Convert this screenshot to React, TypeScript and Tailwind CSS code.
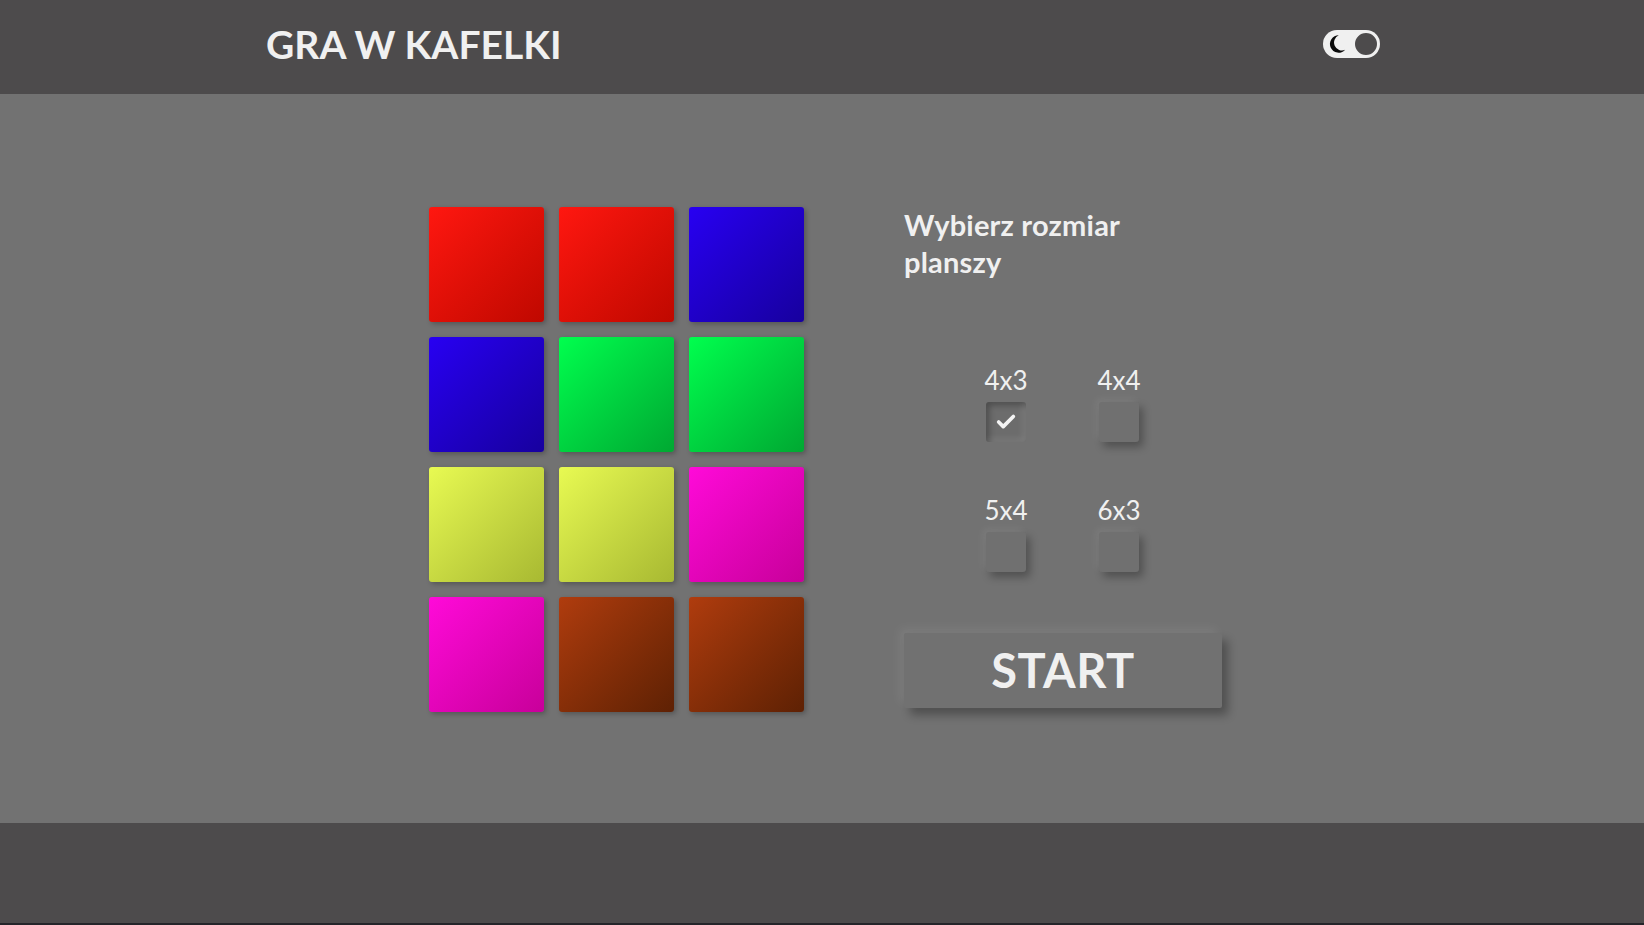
import { Check } from "lucide-react";

const tiles = [
  "from-[#ff1710] to-[#bf0800]",
  "from-[#ff1710] to-[#bf0800]",
  "from-[#2800f2] to-[#17009e]",
  "from-[#2800f2] to-[#17009e]",
  "from-[#00ff4e] to-[#00a832]",
  "from-[#00ff4e] to-[#00a832]",
  "from-[#e8fa52] to-[#a8b932]",
  "from-[#e8fa52] to-[#a8b932]",
  "from-[#ff0ad9] to-[#c8009a]",
  "from-[#ff0ad9] to-[#c8009a]",
  "from-[#b03c0e] to-[#5e2104]",
  "from-[#b03c0e] to-[#5e2104]",
];

const sizes = [
  { label: "4x3", checked: true },
  { label: "4x4", checked: false },
  { label: "5x4", checked: false },
  { label: "6x3", checked: false },
];

function ThemeToggle() {
  return (
    <div className="flex h-[28px] w-[57px] items-center justify-between rounded-full bg-[#f0f0f0] pl-[2px] pr-[1px]">
      <svg width="22" height="22" viewBox="0 0 24 24">
        <path
          d="M15 2.5a9.5 9.5 0 1 0 7 15.8A8 8 0 0 1 15 2.5z"
          fill="#0a0a0a"
        />
      </svg>
      <div className="h-[26px] w-[26px] rounded-full border-2 border-[#f0f0f0] bg-[#4d4b4c]" />
    </div>
  );
}

export default function App() {
  return (
    <div
      className="flex min-h-screen flex-col bg-[#727272] text-[#f0f0f0]"
      style={{ fontFamily: "Lato, 'Open Sans', sans-serif" }}
    >
      <header className="flex h-[94px] items-center justify-between bg-[#4d4b4c] pb-[6px] pl-[266px] pr-[264px]">
        <h1 className="text-[39px] font-bold leading-none">GRA W KAFELKI</h1>
        <ThemeToggle />
      </header>

      <main className="flex h-[729px] items-center justify-center pl-[7px]">
        <div className="mt-[2px] grid grid-cols-3 gap-[15px]">
          {tiles.map((t, i) => (
            <div
              key={i}
              className={`h-[115px] w-[115px] rounded-[3px] bg-gradient-to-br ${t} shadow-[2px_2px_5px_rgba(0,0,0,0.25)]`}
            />
          ))}
        </div>

        <div className="ml-[100px] flex h-[505px] w-[318px] flex-col">
          <h2 className="text-[29px] font-bold leading-[37px] tracking-[0.2px]">
            Wybierz rozmiar
            <br />
            planszy
          </h2>

          <div className="mt-[84px] ml-[72px] grid grid-cols-[60px_60px] gap-x-[53px] gap-y-[52px]">
            {sizes.map((s) => (
              <div key={s.label} className="flex flex-col items-center">
                <span className="text-[26px] leading-[32px]">{s.label}</span>
                <div
                  className={
                    s.checked
                      ? "mt-[6px] flex h-[40px] w-[40px] items-center justify-center rounded-[3px] bg-[#6c6c6c] shadow-[inset_3px_3px_6px_rgba(0,0,0,0.3),inset_-3px_-3px_6px_rgba(255,255,255,0.12)]"
                      : "mt-[6px] h-[40px] w-[40px] rounded-[3px] bg-[#707070] shadow-[4px_5px_8px_rgba(0,0,0,0.3),-3px_-3px_7px_rgba(255,255,255,0.08)]"
                  }
                >
                  {s.checked && <Check size={22} strokeWidth={4} color="#f4f4f4" />}
                </div>
              </div>
            ))}
          </div>

          <button className="mt-[61px] flex h-[75px] w-[318px] items-center justify-center rounded-[2px] bg-[#717171] text-[47px] font-bold tracking-[0.5px] text-[#f0f0f0] shadow-[6px_7px_10px_rgba(0,0,0,0.3),-5px_-5px_10px_rgba(255,255,255,0.07)]">
            START
          </button>
        </div>
      </main>

      <footer className="h-[102px] border-b-2 border-[#25252a] bg-[#4d4b4c]" />
    </div>
  );
}
